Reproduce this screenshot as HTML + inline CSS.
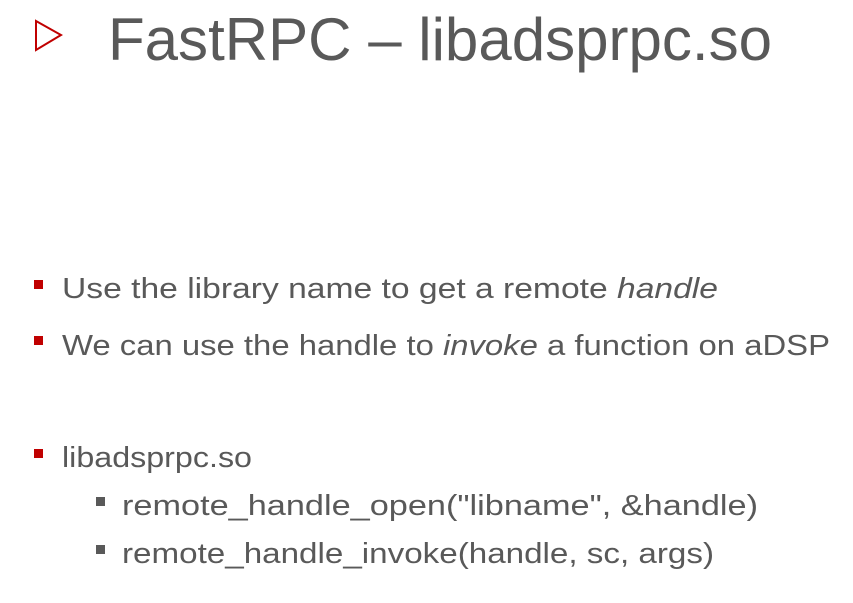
<!DOCTYPE html>
<html><head><meta charset="utf-8"><style>
html,body{margin:0;padding:0;background:#fff;width:853px;height:603px;overflow:hidden}
svg{display:block}
text{font-family:"Liberation Sans",sans-serif;fill:#595959}
</style></head><body>
<svg width="853" height="603" viewBox="0 0 853 603" xmlns="http://www.w3.org/2000/svg">
<polygon points="36,21 61,35 36,50" fill="none" stroke="#c00000" stroke-width="2"/>
<text x="108" y="60" font-size="60" textLength="664" lengthAdjust="spacingAndGlyphs">FastRPC – libadsprpc.so</text>
<rect x="34" y="280" width="9" height="9" fill="#c00000"/>
<text x="62" y="298" font-size="29" textLength="656" lengthAdjust="spacingAndGlyphs">Use the library name to get a remote <tspan font-style="italic">handle</tspan></text>
<rect x="34" y="336" width="9" height="9" fill="#c00000"/>
<text x="62" y="355" font-size="29" textLength="768" lengthAdjust="spacingAndGlyphs">We can use the handle to <tspan font-style="italic">invoke</tspan> a function on aDSP</text>
<rect x="34" y="449" width="9" height="9" fill="#c00000"/>
<text x="62" y="467" font-size="29" textLength="190" lengthAdjust="spacingAndGlyphs">libadsprpc.so</text>
<rect x="96" y="497" width="9" height="9" fill="#595959"/>
<text x="122" y="515" font-size="29" textLength="636" lengthAdjust="spacingAndGlyphs">remote_handle_open("libname",  &amp;handle)</text>
<rect x="96" y="545" width="9" height="9" fill="#595959"/>
<text x="122" y="563" font-size="29" textLength="592" lengthAdjust="spacingAndGlyphs">remote_handle_invoke(handle,  sc, args)</text>
</svg>
</body></html>
